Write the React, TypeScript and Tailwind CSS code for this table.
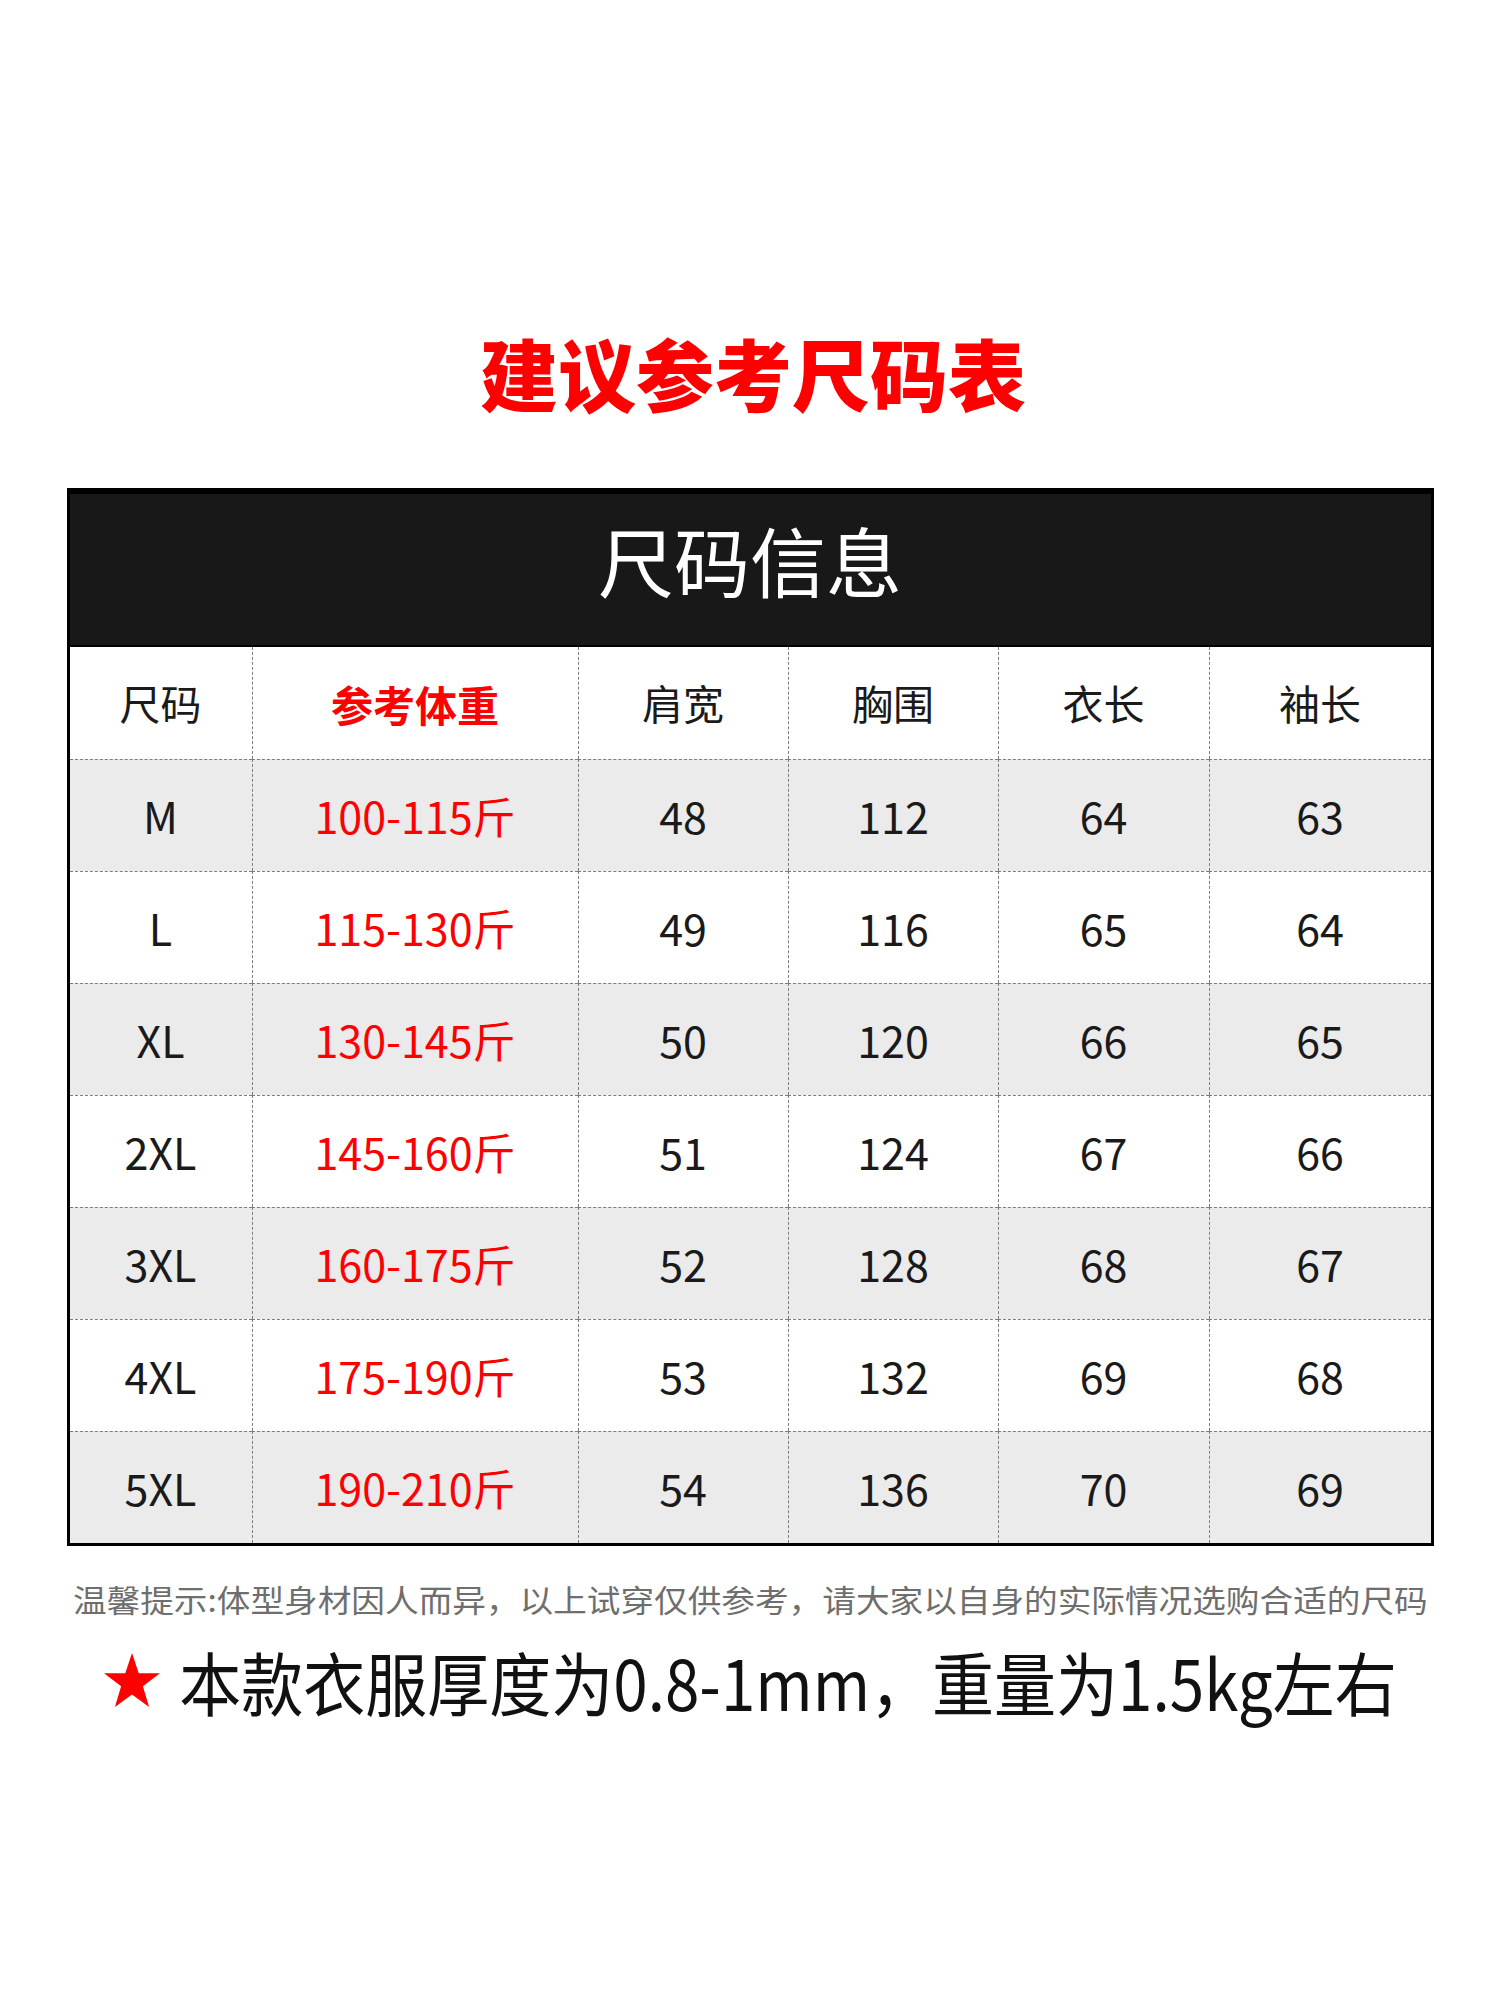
import React from 'react';

const rows = [
  { size: 'M', weight: '100-115斤', shoulder: 48, chest: 112, length: 64, sleeve: 63 },
  { size: 'L', weight: '115-130斤', shoulder: 49, chest: 116, length: 65, sleeve: 64 },
  { size: 'XL', weight: '130-145斤', shoulder: 50, chest: 120, length: 66, sleeve: 65 },
  { size: '2XL', weight: '145-160斤', shoulder: 51, chest: 124, length: 67, sleeve: 66 },
  { size: '3XL', weight: '160-175斤', shoulder: 52, chest: 128, length: 68, sleeve: 67 },
  { size: '4XL', weight: '175-190斤', shoulder: 53, chest: 132, length: 69, sleeve: 68 },
  { size: '5XL', weight: '190-210斤', shoulder: 54, chest: 136, length: 70, sleeve: 69 },
];

const cell = 'h-[112px] flex items-center justify-center';
const divider = 'border-l border-dashed border-[#7d7d7d]';

export default function App() {
  return (
    <div className="w-[1500px] h-[2000px] bg-white font-['Noto_Sans_CJK_SC','Noto_Sans',sans-serif] text-[#1a1a1a]">
      {/* Title */}
      <div className="pt-[328px] pl-[6px] text-center text-[78px] leading-[88px] font-black text-[#ff0000]">
        建议参考尺码表
      </div>

      {/* Size table */}
      <div className="mx-auto mt-[72px] w-[1367px] border-x-[3px] border-b-[3px] border-black">
        <div className="h-[159px] border-t-[6px] border-b-2 border-black bg-[#181818] flex items-center justify-center pb-[22px]">
          <span className="text-white text-[76px] leading-none">尺码信息</span>
        </div>

        <div className="grid grid-cols-[182px_326px_210px_210px_211px_222px]">
          {/* Column headings */}
          <div className={`${cell} text-[41px]`}>尺码</div>
          <div className={`${cell} ${divider} text-[42px] font-bold text-[#ff0000]`}>参考体重</div>
          <div className={`${cell} ${divider} text-[41px]`}>肩宽</div>
          <div className={`${cell} ${divider} text-[41px]`}>胸围</div>
          <div className={`${cell} ${divider} text-[41px]`}>衣长</div>
          <div className={`${cell} ${divider} text-[41px]`}>袖长</div>

          {rows.map((r, i) => {
            const bg = i % 2 === 0 ? 'bg-[#ebebeb]' : 'bg-white';
            const row = `${cell} ${bg} border-t border-dashed border-[#7d7d7d] text-[43px]`;
            return (
              <React.Fragment key={r.size}>
                <div className={row}>{r.size}</div>
                <div className={`${row} border-l text-[#ff0000]`}>{r.weight}</div>
                <div className={`${row} border-l`}>{r.shoulder}</div>
                <div className={`${row} border-l`}>{r.chest}</div>
                <div className={`${row} border-l`}>{r.length}</div>
                <div className={`${row} border-l`}>{r.sleeve}</div>
              </React.Fragment>
            );
          })}
        </div>
      </div>

      {/* Notes */}
      <div className="mt-[33px] h-[40px] flex justify-center">
        <span className="inline-block text-[31px] leading-[40px] text-[#6e6e6e] scale-x-[1.085] whitespace-nowrap">
          温馨提示:体型身材因人而异，以上试穿仅供参考，请大家以自身的实际情况选购合适的尺码
        </span>
      </div>

      <div className="mt-[26px] h-[72px] flex items-center justify-center gap-[18px]">
        <svg width="58" height="58" viewBox="0 0 56 56" className="shrink-0">
          <polygon
            points="28,1 34.5,20.5 55,20.5 38.5,33 44.5,53 28,41 11.5,53 17.5,33 1,20.5 21.5,20.5"
            fill="#ff0000"
          />
        </svg>
        <span className="inline-block text-[62px] leading-[72px] text-[#111] scale-y-[1.12] whitespace-nowrap">
          本款衣服厚度为0.8-1mm，重量为1.5kg左右
        </span>
      </div>
    </div>
  );
}
